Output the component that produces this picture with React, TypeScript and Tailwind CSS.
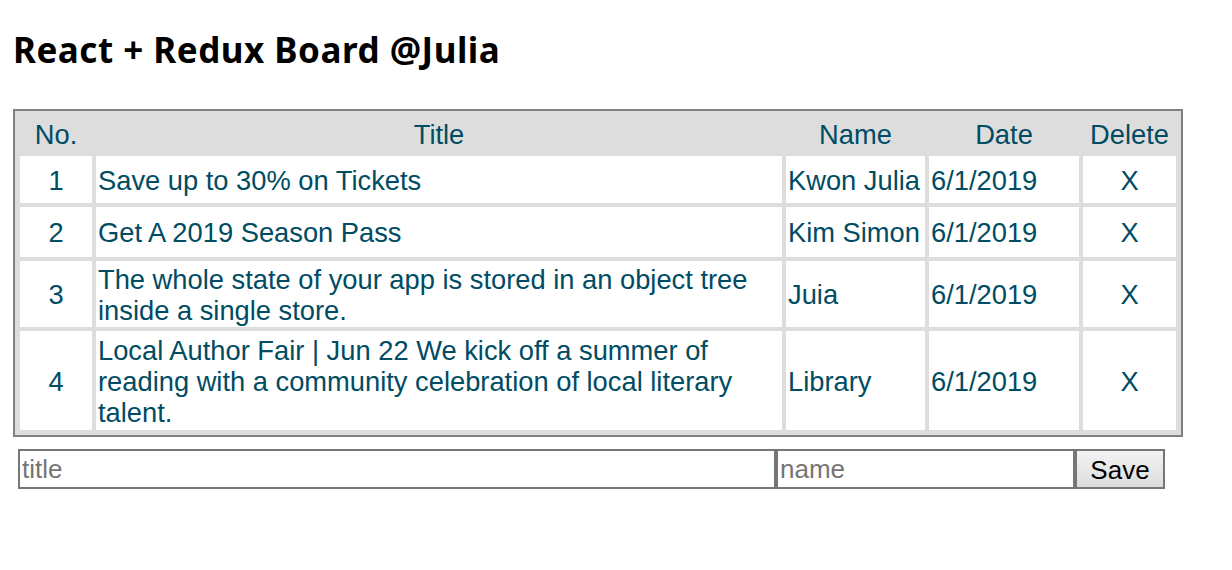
import React from "react";

interface Post {
  no: number;
  title: string;
  name: string;
  date: string;
  height: string;
}

const posts: Post[] = [
  { no: 1, title: "Save up to 30% on Tickets", name: "Kwon Julia", date: "6/1/2019", height: "h-[47px]" },
  { no: 2, title: "Get A 2019 Season Pass", name: "Kim Simon", date: "6/1/2019", height: "h-[50px]" },
  {
    no: 3,
    title: "The whole state of your app is stored in an object tree inside a single store.",
    name: "Juia",
    date: "6/1/2019",
    height: "h-[66px]",
  },
  {
    no: 4,
    title:
      "Local Author Fair | Jun 22 We kick off a summer of reading with a community celebration of local literary talent.",
    name: "Library",
    date: "6/1/2019",
    height: "h-[99px]",
  },
];

export default function App() {
  return (
    <div className="min-h-[570px] bg-white px-[13px] pt-[32px] font-['Liberation_Sans',Arial,sans-serif]">
      <h1 className="text-[35px] leading-none font-bold text-black font-['Noto_Sans',sans-serif] tracking-[0.5px]">
        React + Redux Board @Julia
      </h1>

      {/* BOARD */}
      <table className="mt-[42px] w-[1170px] table-fixed border-separate border-spacing-1 border-2 border-[#808080] bg-[#dddddd] p-px text-[27.3px] leading-[31px] text-[#004c63]">
        <thead>
          <tr className="h-[36px]">
            <th className="w-[72px] p-0 pt-px font-normal text-center">No.</th>
            <th className="w-[686px] p-0 pt-px font-normal text-center">Title</th>
            <th className="w-[139px] p-0 pt-px font-normal text-center">Name</th>
            <th className="w-[150px] p-0 pt-px font-normal text-center">Date</th>
            <th className="p-0 pt-px font-normal text-center">Delete</th>
          </tr>
        </thead>
        <tbody>
          {posts.map((post) => (
            <tr key={post.no} className={post.height}>
              <td className="bg-white p-0 pt-px text-center">{post.no}</td>
              <td className="bg-white px-[2px] pt-px pb-0 text-left">{post.title}</td>
              <td className="bg-white px-[2px] pt-px pb-0 text-left whitespace-nowrap">{post.name}</td>
              <td className="bg-white px-[2px] pt-px pb-0 text-left">{post.date}</td>
              <td className="bg-white p-0 pt-px text-center">X</td>
            </tr>
          ))}
        </tbody>
      </table>

      {/* NEW POST FORM */}
      <div className="mt-[12px] ml-[5px] flex text-[26px] font-['Liberation_Sans',Arial,sans-serif]">
        <input
          placeholder="title"
          className="h-[40px] w-[758px] border-2 border-[#767676] bg-white px-[2px] text-black placeholder:text-[#757575] outline-none"
        />
        <input
          placeholder="name"
          className="h-[40px] w-[299px] border-2 border-[#767676] bg-white px-[2px] text-black placeholder:text-[#757575] outline-none"
        />
        <button className="h-[40px] w-[90px] border-2 border-[#767676] bg-gradient-to-b from-[#f3f3f3] to-[#dcdcdc] text-black">
          Save
        </button>
      </div>
    </div>
  );
}
